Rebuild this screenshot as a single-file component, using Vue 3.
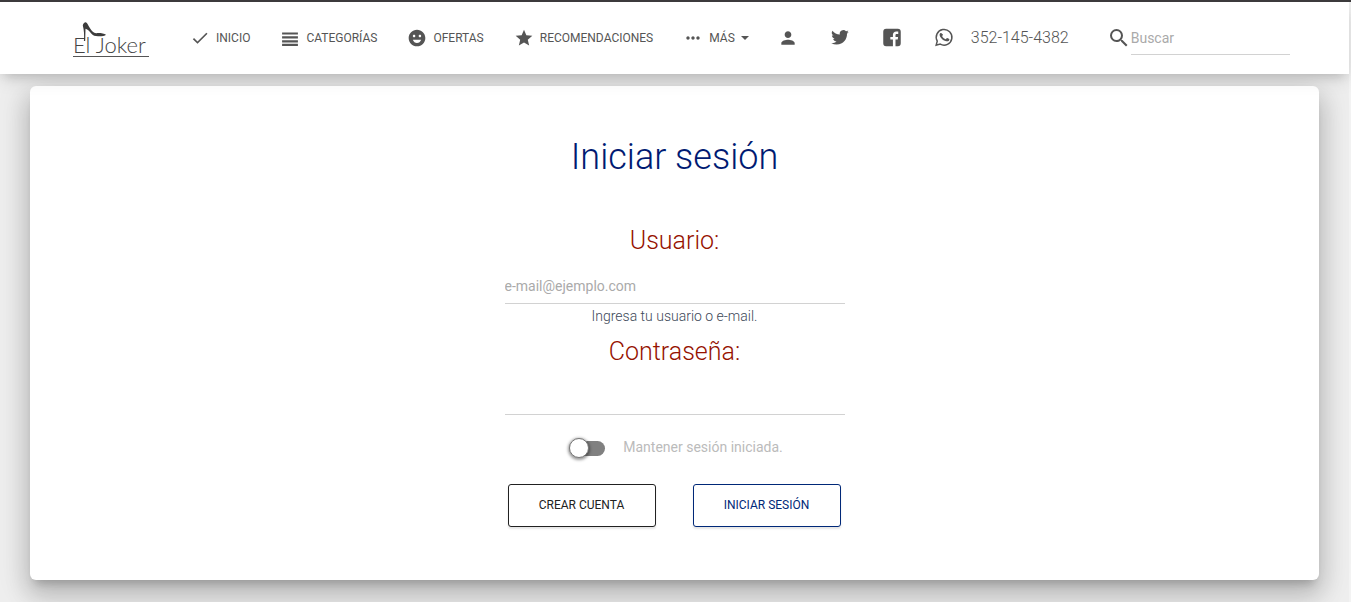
<script setup>
import { ref } from 'vue'

const links = [
  { label: 'INICIO', d: 'M9 16.17 4.83 12l-1.42 1.41L9 19 21 7l-1.41-1.41z' },
  { label: 'CATEGORÍAS', d: 'M2.500 14.700h19v2.600h-19zM2.500 19h19v2.600h-19zM2.500 10h19v2.600h-19zM2.500 5.300h19v2.600h-19z' },
  { label: 'OFERTAS', d: 'M12 2C6.47 2 2 6.47 2 12s4.47 10 10 10 10-4.47 10-10S17.53 2 12 2zM8.5 8c.83 0 1.5.67 1.5 1.5S9.33 11 8.5 11 7 10.33 7 9.5 7.67 8 8.5 8zM12 18c-2.28 0-4.22-1.66-5-4h10c-.78 2.34-2.72 4-5 4zm3.5-7c-.83 0-1.5-.67-1.5-1.5S14.67 8 15.5 8s1.5.67 1.5 1.5-.67 1.5-1.5 1.5z' },
  { label: 'RECOMENDACIONES', d: 'M12 17.27 18.18 21l-1.64-7.03L22 9.24l-7.19-.61L12 2 9.19 8.63 2 9.24l5.46 4.73L5.82 21z' },
  { label: 'MÁS', caret: true, d: 'M6 10c-1.1 0-2 .9-2 2s.9 2 2 2 2-.9 2-2-.9-2-2-2zm12 0c-1.1 0-2 .9-2 2s.9 2 2 2 2-.9 2-2-.9-2-2-2zm-6 0c-1.1 0-2 .9-2 2s.9 2 2 2 2-.9 2-2-.9-2-2-2z' },
]

const social = [
  { label: 'Perfil', d: 'M12 12c2.21 0 4-1.79 4-4s-1.79-4-4-4-4 1.79-4 4 1.79 4 4 4zm0 2c-2.67 0-8 1.34-8 4v2h16v-2c0-2.66-5.33-4-8-4z' },
  { label: 'Twitter', d: 'M22.5 4.600c-.8.4-1.600.6-2.500.7.9-.5 1.600-1.400 1.900-2.400-.8.5-1.800.9-2.700 1.100a4.300 4.300 0 0 0-7.400 3.900C8.200 7.700 5 6 2.900 3.400a4.300 4.300 0 0 0 1.300 5.800c-.7 0-1.400-.2-1.900-.5v.1c0 2.100 1.500 3.800 3.400 4.200-.6.200-1.300.2-1.900.1.500 1.700 2.100 2.900 4 3-1.800 1.400-4.100 2-6.300 1.800A12.200 12.200 0 0 0 8.100 19.800c8 0 12.600-6.800 12.300-12.900.8-.6 1.600-1.400 2.100-2.300z' },
  { label: 'Facebook', d: 'M5 .9h14A3.500 3.500 0 0 1 22.500 4.400v14a3.500 3.500 0 0 1-3.500 3.500h-2.800v-8h2.700l.4-3.200h-3.100v-2c0-1 .4-1.600 1.600-1.600h1.700V4.200c-.4 0-1.200-.1-2.300-.1-2.600 0-4.100 1.500-4.100 4.100v2.500H10v3.200h3.100v8H5A3.500 3.500 0 0 1 1.500 18.400V4.400A3.500 3.500 0 0 1 5 .9z' },
]

const search = ref('')
const user = ref('')
const password = ref('')
const keep = ref(false)
</script>

<template>
  <div class="page">
    <header class="navbar">
      <a class="brand" href="#" aria-label="El Joker">
        <svg class="shoe" viewBox="0 0 25 20" aria-hidden="true">
          <path d="M.8 3.500C1 1.500 2.500.2 3.800.3 5.500 1 5.800 3.200 8 6.200c2 2.800 3.800 5.300 6.500 5 3.500-.3 7.500.3 9.500 1.600-1 1.400-5 1.600-8 1.500-3-.1-5-.5-7-3C7.400 9.300 6 7.600 3.500 6.800L3.200 19H1.900C2.400 13 2 8 .8 3.500z" />
        </svg>
        <span class="wordmark">El Joker</span>
      </a>
      <nav class="links">
        <a v-for="l in links" :key="l.label" class="link" href="#">
          <svg class="icon" viewBox="0 0 24 24" aria-hidden="true"><path :d="l.d" /></svg>
          <span>{{ l.label }}</span>
          <i v-if="l.caret" class="caret"></i>
        </a>
      </nav>
      <div class="social">
        <a v-for="s in social" :key="s.label" href="#" :aria-label="s.label">
          <svg class="icon" viewBox="0 0 24 24" aria-hidden="true"><path :d="s.d" /></svg>
        </a>
        <a class="phone" href="#">
          <svg class="icon" viewBox="0 0 24 24" aria-hidden="true">
            <path class="stroke" d="M2.600 20.600l1.300-4.900a9.400 9.400 0 1 1 3.600 3.600z" />
            <path d="M8.800 6.800c-.3-.6-.5-.6-.8-.6-.8 0-2 1-2 2.800s1.300 3.500 1.500 3.700c.2.300 2.500 4 6.200 5.400 3 1.200 3.700.9 4.300.8.7-.1 2.100-.9 2.400-1.700.3-.8.300-1.500.2-1.700-.1-.2-.3-.3-.7-.5l-2.400-1.100c-.3-.1-.6-.2-.8.200l-1.100 1.400c-.2.2-.4.3-.8.1-.4-.2-1.500-.6-2.900-1.800-1.100-1-1.800-2.200-2-2.500-.2-.4 0-.6.200-.7l.9-1.100c.2-.3.100-.6 0-.8z" transform="translate(1.900 .9) scale(.8)" />
          </svg>
          <span>352-145-4382</span>
        </a>
      </div>
      <form class="search" @submit.prevent>
        <label for="search" aria-label="Buscar">
          <svg viewBox="0 0 24 24" aria-hidden="true">
            <path d="M15.500 14h-.79l-.28-.27A6.471 6.471 0 0 0 16 9.500 6.500 6.500 0 1 0 9.500 16c1.610 0 3.090-.59 4.230-1.570l.27.280v.79l5 4.990L20.490 19l-4.990-5zm-6 0C7.010 14 5 11.990 5 9.500S7.010 5 9.500 5 14 7.010 14 9.500 11.990 14 9.500 14z" />
          </svg>
        </label>
        <input id="search" v-model="search" type="text" placeholder="Buscar" />
      </form>
    </header>

    <main class="card">
      <h2>Iniciar sesión</h2>
      <form class="login" @submit.prevent>
        <label class="title" for="user">Usuario:</label>
        <input id="user" v-model="user" type="email" placeholder="e-mail@ejemplo.com" />
        <small>Ingresa tu usuario o e-mail.</small>
        <label class="title second" for="password">Contraseña:</label>
        <input id="password" v-model="password" type="password" />
        <label class="keep">
          <input v-model="keep" type="checkbox" />
          <span class="track"><span class="knob"></span></span>
          <span>Mantener sesión iniciada.</span>
        </label>
        <div class="actions">
          <button type="button">CREAR CUENTA</button>
          <button class="primary" type="submit">INICIAR SESIÓN</button>
        </div>
      </form>
    </main>
  </div>
</template>

<style>
body {
  background: #eee;
}
</style>

<style scoped>
.page {
  box-sizing: border-box;
  min-height: 100vh;
  padding-right: 2px;
  border-top: 2px solid #3c3a3c;
  background: linear-gradient(to left, #f3f3f3 2px, #eee 2px);
  color: #3c4858;
  font: 300 14px/20px Roboto, "Liberation Sans", sans-serif;
  overflow: hidden;
}
a {
  color: #555;
  text-decoration: none;
}
.navbar {
  position: relative;
  z-index: 1;
  box-sizing: border-box;
  display: flex;
  align-items: center;
  min-height: 72px;
  padding: 0 59px 0 73px;
  background: #fff;
  box-shadow: 0 4px 18px 0 rgba(0, 0, 0, .12), 0 7px 10px -5px rgba(0, 0, 0, .15);
}
.brand {
  position: relative;
  width: 76px;
  height: 34px;
  margin: 4px 41px 0 0;
  border-bottom: 1px solid #555;
  box-sizing: border-box;
  white-space: nowrap;
}
.shoe {
  position: absolute;
  left: 9px;
  top: -1px;
  width: 25px;
  height: 20px;
  fill: #3c3c3c;
}
.wordmark {
  display: block;
  padding-top: 11px;
  color: #444;
  font: 300 22px/22px Lato, sans-serif;
}
.links,
.social {
  display: flex;
  align-items: center;
}
.links {
  gap: 30px;
  font-size: 12px;
  font-weight: 400;
}
.link {
  display: flex;
  align-items: center;
  gap: 6px;
}
.icon {
  display: block;
  width: 20px;
  height: 20px;
  fill: #555;
}
.stroke {
  fill: none;
  stroke: #555;
  stroke-width: 1.8;
}
.caret {
  border: 4px solid transparent;
  border-top-color: #555;
  border-bottom: 0;
}
.social {
  gap: 32px;
  margin-left: 29px;
}
.phone {
  display: flex;
  align-items: center;
  gap: 17px;
  font-size: 16px;
}
.search {
  display: flex;
  align-items: center;
  flex: 1;
  margin-left: 38px;
}
.search svg {
  display: block;
  width: 24px;
  height: 24px;
  fill: #555;
}
input {
  box-sizing: border-box;
  width: 100%;
  min-width: 0;
  height: 36px;
  padding: 0;
  border: 0;
  border-bottom: 1px solid #d2d2d2;
  outline: 0;
  background: transparent;
  color: #495057;
  font: 400 14px/20px Roboto, "Liberation Sans", sans-serif;
}
.search input {
  height: 34px;
}
input::placeholder {
  color: #aaa;
  opacity: 1;
}
.card {
  margin: 12px 30px 22px;
  padding: 48px 16px 53px;
  border-radius: 6px;
  background: #fff;
  box-shadow: 0 16px 24px 2px rgba(0, 0, 0, .14), 0 6px 30px 5px rgba(0, 0, 0, .12), 0 8px 10px -5px rgba(0, 0, 0, .2);
  text-align: center;
}
h2 {
  margin: 0;
  color: #001a72;
  font-size: 36px;
  font-weight: 300;
  line-height: 46px;
}
.login {
  display: flex;
  flex-direction: column;
  width: 340px;
  max-width: 100%;
  margin: 43px auto 0;
}
.title {
  color: #961200;
  font-size: 25px;
  line-height: 36px;
  margin-bottom: 10px;
}
.login > input {
  height: 35px;
}
.second {
  margin-top: 8px;
}
small {
  margin-top: 2px;
  font-size: 14px;
}
.keep {
  display: flex;
  align-items: center;
  align-self: center;
  gap: 18px;
  margin: 22px 0 0 5px;
  color: #bbb;
  font-weight: 400;
}
.keep input {
  position: absolute;
  width: 1px;
  height: 1px;
  opacity: 0;
}
.track {
  position: relative;
  width: 34px;
  height: 15px;
  margin-top: 2px;
  border-radius: 15px;
  background: #808080;
}
.knob {
  position: absolute;
  box-sizing: border-box;
  left: -2px;
  top: -3px;
  width: 20px;
  height: 20px;
  border: 1px solid #777;
  border-radius: 50%;
  background: #fff;
  box-shadow: 0 1px 3px 1px rgba(0, 0, 0, .4);
}
.keep input:checked + .track .knob {
  left: 16px;
}
.actions {
  display: flex;
  justify-content: space-between;
  margin: 27px 4px 0 3px;
}
button {
  box-sizing: border-box;
  width: 148px;
  height: 43px;
  padding: 0 0 2px;
  border: 1px solid #212121;
  border-radius: 3px;
  background: #fff;
  color: #212121;
  box-shadow: 0 2px 2px rgba(0, 0, 0, .1);
  font: 400 12px/20px Roboto, "Liberation Sans", sans-serif;
}
.primary {
  border-color: #002878;
  color: #002878;
}
</style>
